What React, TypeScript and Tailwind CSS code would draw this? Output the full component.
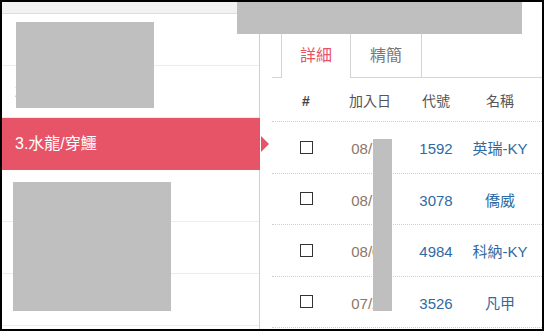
import React from "react";

const font = { fontFamily: '"Liberation Sans", "Noto Sans CJK TC", sans-serif' };

const menu = [
  { label: "1.", active: false },
  { label: "2.", active: false },
  { label: "3.水龍/穿鱷", active: true },
  { label: "4.", active: false },
  { label: "5.", active: false },
  { label: "6.", active: false },
];

const rows = [
  { date: "08/12", code: "1592", name: "英瑞-KY" },
  { date: "08/12", code: "3078", name: "僑威" },
  { date: "08/05", code: "4984", name: "科納-KY" },
  { date: "07/29", code: "3526", name: "凡甲" },
];

function Checkbox() {
  return <div className="mx-auto h-[13px] w-[13px] border border-[#333] bg-white" />;
}

export default function App() {
  return (
    <div className="h-[331px] w-[544px] bg-black p-[2px]" style={font}>
      <div className="relative flex h-[327px] w-[540px] overflow-hidden bg-white">
        <aside className="flex w-[258px] shrink-0 flex-col border-r border-[#cfcfcf]">
          <div className="h-[12px] border-b border-[#dcdcdc] bg-[#f2f2f2]" />
          {menu.map((m) =>
            m.active ? (
              <div
                key={m.label}
                className="relative -mr-px flex h-[52px] items-center bg-[#e75467] px-[13px] text-[16px] text-white"
              >
                {m.label}
                <span className="absolute right-[-9px] top-[18px] h-0 w-0 border-y-[8px] border-l-[8px] border-y-transparent border-l-[#e75467]" />
              </div>
            ) : (
              <div
                key={m.label}
                className="flex h-[52px] items-center border-b border-[#ececec] px-[13px] text-[16px] text-[#333]"
              >
                {m.label}
              </div>
            )
          )}
        </aside>

        <main className="min-w-0 flex-1 pl-[12px]">
          <div className="mt-[31px] flex h-[45px] border-b border-[#d4d4d4] pl-[9px]">
            <div className="-mb-px flex h-[45px] w-[70px] items-center justify-center border-x border-t border-[#d4d4d4] bg-white text-[16px] text-[#e75467]">
              詳細
            </div>
            <div className="flex h-[44px] w-[71px] items-center justify-center border-r border-t border-[#d4d4d4] text-[16px] text-[#777]">
              精簡
            </div>
          </div>

          <div className="w-[300px]">
            <div className="flex h-[44px] items-center border-b border-dotted border-[#cfcfcf] pt-[4px] text-[14px] text-[#555]">
              <div className="w-[68px] text-center font-bold text-[#444]">#</div>
              <div className="w-[60px] text-center">加入日</div>
              <div className="w-[72px] text-center">代號</div>
              <div className="w-[56px] text-center">名稱</div>
            </div>
            {rows.map((r) => (
              <div
                key={r.code}
                className="flex h-[51.5px] items-center border-b border-dotted border-[#cfcfcf] pt-[4px] text-[15px]"
              >
                <div className="w-[68px] -translate-y-[2px]">
                  <Checkbox />
                </div>
                <div className="w-[60px] text-center text-[#8f7667]">{r.date}</div>
                <div className="w-[72px] text-center text-[#2f6aa3]">{r.code}</div>
                <div className="w-[56px] whitespace-nowrap text-center text-[#2f6aa3]">{r.name}</div>
              </div>
            ))}
          </div>
        </main>

        {/* redaction blocks */}
        <div className="absolute left-[235px] top-0 h-[32px] w-[285px] bg-[#bfbfbf]" />
        <div className="absolute left-[14px] top-[20px] h-[86px] w-[138px] bg-[#bfbfbf]" />
        <div className="absolute left-[11px] top-[180px] h-[129px] w-[158px] bg-[#bfbfbf]" />
        <div className="absolute left-[371px] top-[137px] h-[172px] w-[19px] bg-[#bfbfbf]" />
      </div>
    </div>
  );
}
